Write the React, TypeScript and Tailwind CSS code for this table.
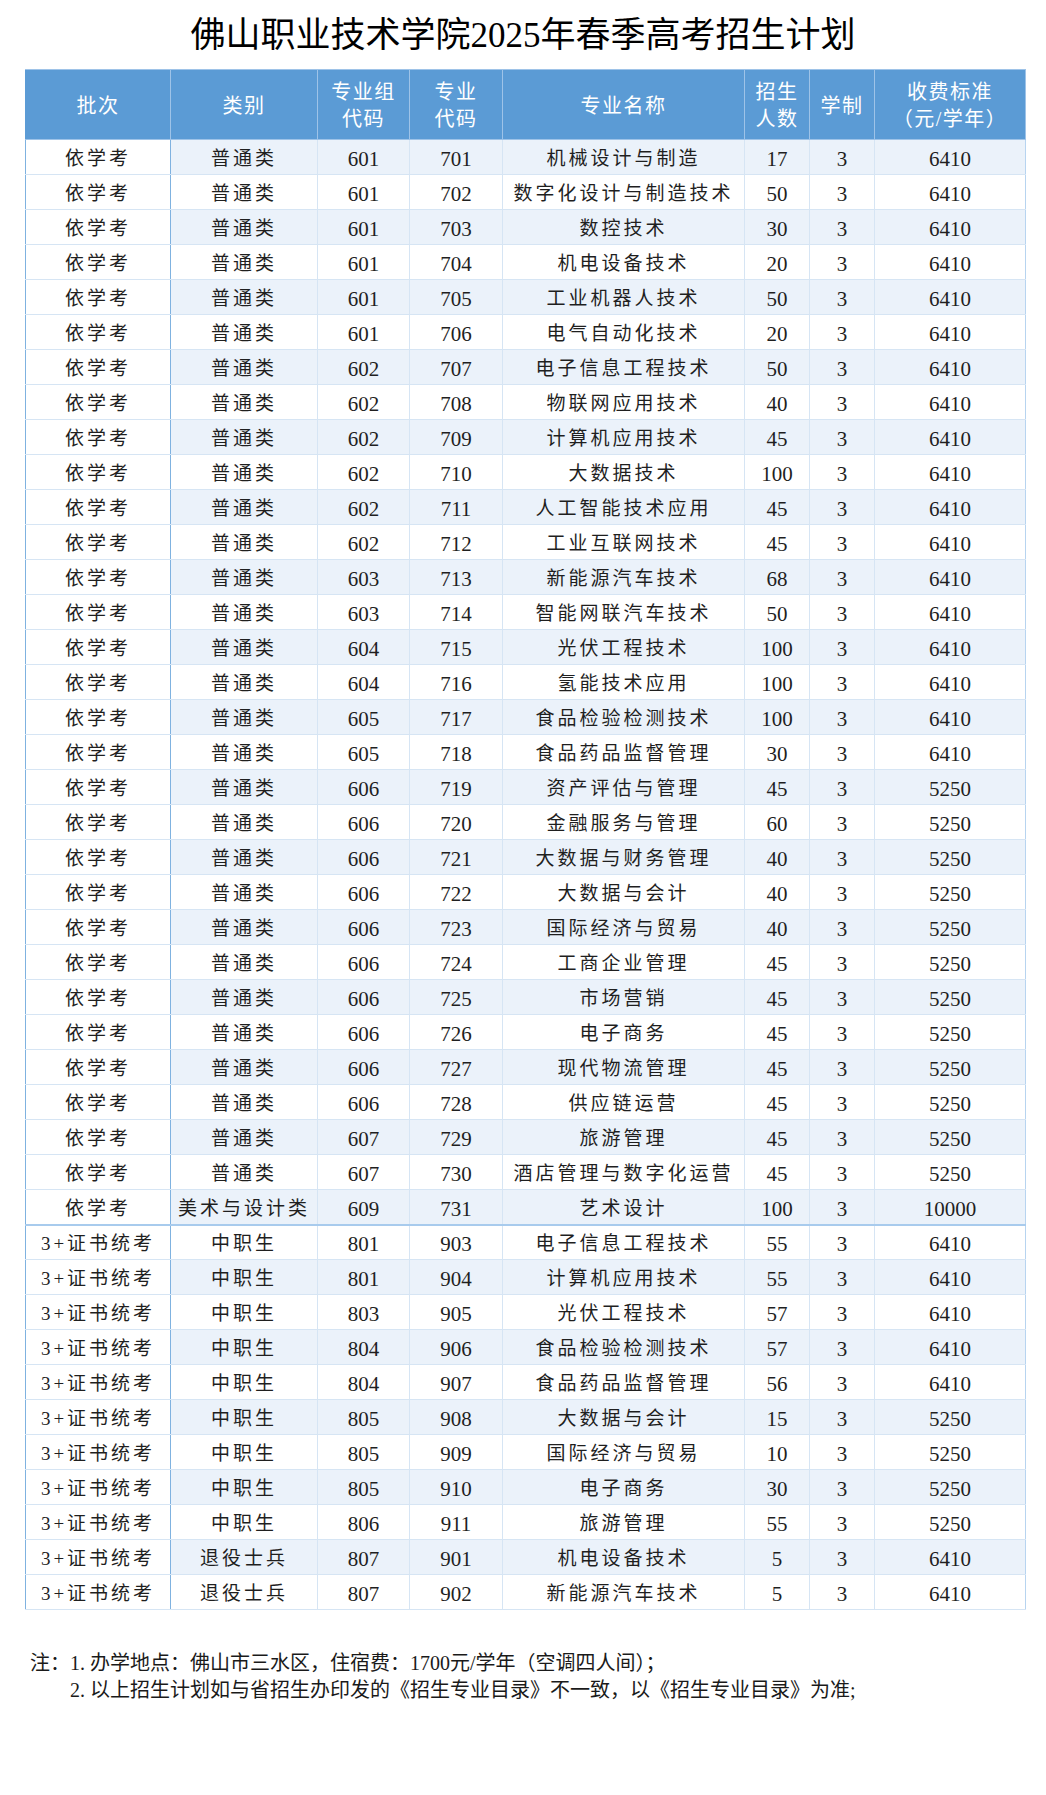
import React from 'react';

type Row = {
  batch: string;
  kind: string;
  group: string;
  code: string;
  name: string;
  count: string;
  years: string;
  fee: string;
};

const base: [string, string, string, string, string][] = [
  ['601', '701', '机械设计与制造', '17', '6410'],
  ['601', '702', '数字化设计与制造技术', '50', '6410'],
  ['601', '703', '数控技术', '30', '6410'],
  ['601', '704', '机电设备技术', '20', '6410'],
  ['601', '705', '工业机器人技术', '50', '6410'],
  ['601', '706', '电气自动化技术', '20', '6410'],
  ['602', '707', '电子信息工程技术', '50', '6410'],
  ['602', '708', '物联网应用技术', '40', '6410'],
  ['602', '709', '计算机应用技术', '45', '6410'],
  ['602', '710', '大数据技术', '100', '6410'],
  ['602', '711', '人工智能技术应用', '45', '6410'],
  ['602', '712', '工业互联网技术', '45', '6410'],
  ['603', '713', '新能源汽车技术', '68', '6410'],
  ['603', '714', '智能网联汽车技术', '50', '6410'],
  ['604', '715', '光伏工程技术', '100', '6410'],
  ['604', '716', '氢能技术应用', '100', '6410'],
  ['605', '717', '食品检验检测技术', '100', '6410'],
  ['605', '718', '食品药品监督管理', '30', '6410'],
  ['606', '719', '资产评估与管理', '45', '5250'],
  ['606', '720', '金融服务与管理', '60', '5250'],
  ['606', '721', '大数据与财务管理', '40', '5250'],
  ['606', '722', '大数据与会计', '40', '5250'],
  ['606', '723', '国际经济与贸易', '40', '5250'],
  ['606', '724', '工商企业管理', '45', '5250'],
  ['606', '725', '市场营销', '45', '5250'],
  ['606', '726', '电子商务', '45', '5250'],
  ['606', '727', '现代物流管理', '45', '5250'],
  ['606', '728', '供应链运营', '45', '5250'],
  ['607', '729', '旅游管理', '45', '5250'],
  ['607', '730', '酒店管理与数字化运营', '45', '5250'],
];

const vocational: [string, string, string, string, string, string][] = [
  ['中职生', '801', '903', '电子信息工程技术', '55', '6410'],
  ['中职生', '801', '904', '计算机应用技术', '55', '6410'],
  ['中职生', '803', '905', '光伏工程技术', '57', '6410'],
  ['中职生', '804', '906', '食品检验检测技术', '57', '6410'],
  ['中职生', '804', '907', '食品药品监督管理', '56', '6410'],
  ['中职生', '805', '908', '大数据与会计', '15', '5250'],
  ['中职生', '805', '909', '国际经济与贸易', '10', '5250'],
  ['中职生', '805', '910', '电子商务', '30', '5250'],
  ['中职生', '806', '911', '旅游管理', '55', '5250'],
  ['退役士兵', '807', '901', '机电设备技术', '5', '6410'],
  ['退役士兵', '807', '902', '新能源汽车技术', '5', '6410'],
];

const rows: Row[] = [
  ...base.map(([group, code, name, count, fee]) => ({
    batch: '依学考',
    kind: '普通类',
    group,
    code,
    name,
    count,
    years: '3',
    fee,
  })),
  {
    batch: '依学考',
    kind: '美术与设计类',
    group: '609',
    code: '731',
    name: '艺术设计',
    count: '100',
    years: '3',
    fee: '10000',
  },
  ...vocational.map(([kind, group, code, name, count, fee]) => ({
    batch: '3+证书统考',
    kind,
    group,
    code,
    name,
    count,
    years: '3',
    fee,
  })),
];

const widths = [145, 147, 92, 93, 242, 65, 65, 151];

const headers: React.ReactNode[] = [
  '批次',
  '类别',
  <>专业组<br />代码</>,
  <>专业<br />代码</>,
  '专业名称',
  <>招生<br />人数</>,
  '学制',
  <>收费标准<br />（元/学年）</>,
];

const text = 'text-[19px] tracking-[3px]';
const num = 'text-[21px]';

export default function App() {
  return (
    <div className="w-[1046px] min-h-[1795px] bg-white font-['Liberation_Serif','Noto_Sans_CJK_SC',serif] text-[#1f1f1f]">
      <div className="h-[69px] pt-[2px] flex items-center justify-center text-[35px] leading-none text-black">
        佛山职业技术学院2025年春季高考招生计划
      </div>

      <table className="ml-[25px] w-[1000px] table-fixed border-collapse">
        <colgroup>
          {widths.map((w, i) => (
            <col key={i} style={{ width: w }} />
          ))}
        </colgroup>
        <thead>
          <tr className="h-[70px] bg-[#5b9bd5]">
            {headers.map((h, i) => (
              <th
                key={i}
                className={`border border-[#9ec3e8] p-0 pt-[3px] text-white font-normal text-[20px] leading-[27px] tracking-[1.5px] ${
                  i === 0 ? 'border-l-[#5b9bd5]' : ''
                }`}
              >
                {h}
              </th>
            ))}
          </tr>
        </thead>
        <tbody>
          {rows.map((r, i) => {
            const striped = i % 2 === 0 ? 'bg-[#ebf2fa]' : 'bg-white';
            const split = r.batch === '3+证书统考' && rows[i - 1]?.batch === '依学考';
            const cell = `border-b border-r border-[#d6e5f4] p-0 pt-[4px] leading-[26px] ${split ? 'border-t-2 border-t-[#a8cbed]' : ''}`;
            return (
              <tr key={i} className="h-[35px] text-center">
                <td className={`${cell} bg-white border-l border-l-[#7fb2e0] border-r-[#7fb2e0] ${text}`}>
                  {r.batch}
                </td>
                <td className={`${cell} ${striped} ${text}`}>{r.kind}</td>
                <td className={`${cell} ${striped} ${num}`}>{r.group}</td>
                <td className={`${cell} ${striped} ${num}`}>{r.code}</td>
                <td className={`${cell} ${striped} ${text}`}>{r.name}</td>
                <td className={`${cell} ${striped} ${num}`}>{r.count}</td>
                <td className={`${cell} ${striped} ${num}`}>{r.years}</td>
                <td className={`${cell} ${striped} ${num} border-r-[#b7d4f0]`}>{r.fee}</td>
              </tr>
            );
          })}
        </tbody>
      </table>

      <div className="mt-[40px] ml-[30px] flex text-[20px] leading-[27px] text-[#1a1a1a]">
        <span>注：</span>
        <div className="flex flex-col">
          <span>1. 办学地点：佛山市三水区，住宿费：1700元/学年（空调四人间）；</span>
          <span>2. 以上招生计划如与省招生办印发的《招生专业目录》不一致，以《招生专业目录》为准;</span>
        </div>
      </div>
    </div>
  );
}
